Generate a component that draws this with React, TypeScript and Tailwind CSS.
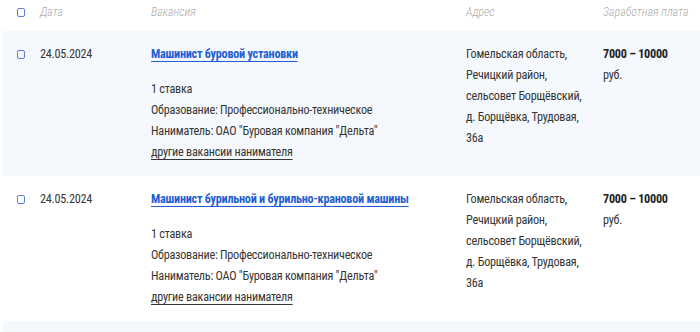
import { Fragment } from 'react';

interface Vacancy {
  date: string;
  title: string;
  rate: string;
  education: string;
  employer: string;
  address: string[];
  salary: string;
}

const VACANCIES: Vacancy[] = [
  {
    date: '24.05.2024',
    title: 'Машинист буровой установки',
    rate: '1 ставка',
    education: 'Образование: Профессионально-техническое',
    employer: 'Наниматель: ОАО "Буровая компания "Дельта"',
    address: ['Гомельская область,', 'Речицкий район,', 'сельсовет Борщёвский,', 'д. Борщёвка, Трудовая,', '36а'],
    salary: '7000 – 10000',
  },
  {
    date: '24.05.2024',
    title: 'Машинист бурильной и бурильно-крановой машины',
    rate: '1 ставка',
    education: 'Образование: Профессионально-техническое',
    employer: 'Наниматель: ОАО "Буровая компания "Дельта"',
    address: ['Гомельская область,', 'Речицкий район,', 'сельсовет Борщёвский,', 'д. Борщёвка, Трудовая,', '36а'],
    salary: '7000 – 10000',
  },
];

const FONT = "font-['Roboto_Condensed','Liberation_Sans_Narrow',Roboto,sans-serif]";

function Checkbox() {
  return <span className="block w-[8px] h-[9px] rounded-[2px] border-[1.5px] border-[#5b7fe0]" />;
}

export default function App() {
  return (
    <div className={`w-[700px] h-[332px] overflow-hidden bg-white text-[#363636] ${FONT}`}>
      <div className="grid grid-cols-[40px_111px_315px_137px_97px] items-start h-[31px] pt-[4px] text-[12px] font-light italic text-[#adadad] leading-[16px]">
        <div className="pl-[17px] pt-[4px] not-italic">
          <Checkbox />
        </div>
        <div>Дата</div>
        <div>Вакансия</div>
        <div>Адрес</div>
        <div>Заработная плата</div>
      </div>

      {VACANCIES.map((v, i) => {
        const shaded = i % 2 === 0;
        return (
          <div
            key={i}
            className={`grid pt-[13px] pb-[13px] h-[145px] text-[12.2px] tracking-[-0.25px] leading-[21px] ${
              shaded
                ? 'grid-cols-[37px_111px_315px_137px_97px] bg-[#f5f9fd] ml-[3px]'
                : 'grid-cols-[40px_111px_315px_137px_97px] bg-white'
            }`}
          >
            <div className={`${shaded ? 'pl-[14px]' : 'pl-[17px]'} pt-[6px]`}>
              <Checkbox />
            </div>
            <div>{v.date}</div>
            <div>
              <a href="#" className="font-bold text-[#1f5fd1] underline underline-offset-[3px]">
                {v.title}
              </a>
              <div className="mt-[14px]">{v.rate}</div>
              <div>{v.education}</div>
              <div>{v.employer}</div>
              <a href="#" className="underline underline-offset-[3px]">
                другие вакансии нанимателя
              </a>
            </div>
            <div>
              {v.address.map((line, j) => (
                <Fragment key={j}>
                  {line}
                  <br />
                </Fragment>
              ))}
            </div>
            <div>
              <div className="font-bold text-[#222]">{v.salary}</div>
              <div>руб.</div>
            </div>
          </div>
        );
      })}
      <div className="h-[20px] bg-[#f5f9fd] ml-[3px]" />
    </div>
  );
}
